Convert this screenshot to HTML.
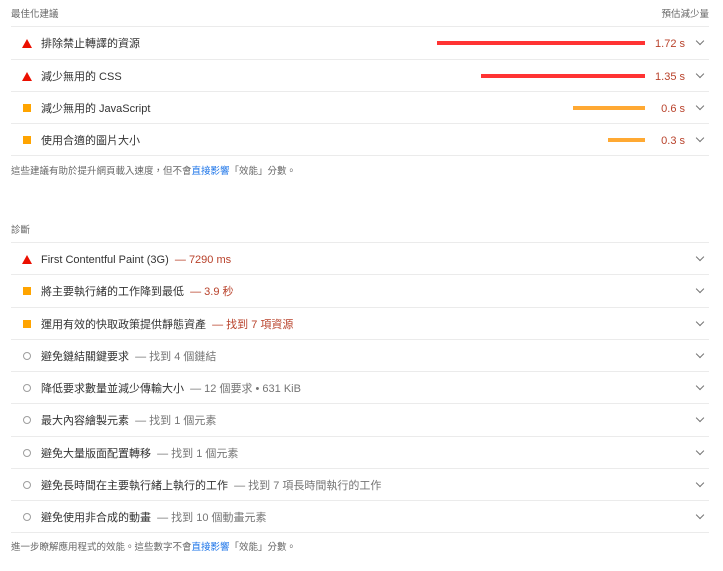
<!DOCTYPE html>
<html><head><meta charset="utf-8"><style>
*{margin:0;padding:0;box-sizing:border-box}
body{width:723px;height:571px;background:#fff;font-family:"Liberation Sans","Noto Sans CJK TC",sans-serif;font-size:11px;color:#333;position:relative;overflow:hidden}
.hd{position:absolute;font-size:9.5px;color:#666;line-height:12px}
.row{position:absolute;left:11px;width:698px;height:32px;border-top:1px solid #ebebeb}
.row .t{position:absolute;left:30px;top:10px;white-space:nowrap;line-height:14px}
.ic{position:absolute;left:11px;top:12px}
.tri{width:0;height:0;border-left:5px solid transparent;border-right:5px solid transparent;border-bottom:9px solid #eb0f00}
.sq{width:8px;height:8px;background:#ffa400;left:12px;top:12px}
.ci{width:8px;height:8px;border:1px solid #9e9e9e;border-radius:50%;left:12px;top:12px}
.bar{position:absolute;top:14px;height:4px}
.val{position:absolute;right:24px;top:10px;line-height:14px;color:#b8412a}
.chev{position:absolute;right:6px;top:11px;width:6px;height:6px;border-right:1px solid #757575;border-bottom:1px solid #757575;transform:rotate(45deg)}
.end{position:absolute;left:11px;width:698px;border-top:1px solid #ebebeb}
.r{color:#b8412a}.g{color:#757575}
.foot{position:absolute;left:11px;font-size:9.5px;color:#666;line-height:12px}
.foot a{color:#1a73e8;text-decoration:none}
</style></head><body>
<div class="hd" style="left:11px;top:9px">最佳化建議</div>
<div class="hd" style="right:14px;top:9px">預估減少量</div>

<div class="row" style="top:26px"><div class="ic tri"></div><div class="t">排除禁止轉譯的資源</div><div class="bar" style="left:426px;width:208px;background:#f33"></div><div class="val">1.72 s</div><div class="chev"></div></div>
<div class="row" style="top:59px"><div class="ic tri"></div><div class="t">減少無用的 CSS</div><div class="bar" style="left:470px;width:164px;background:#f33"></div><div class="val">1.35 s</div><div class="chev"></div></div>
<div class="row" style="top:91px"><div class="ic sq"></div><div class="t">減少無用的 JavaScript</div><div class="bar" style="left:562px;width:72px;background:#ffa933"></div><div class="val">0.6 s</div><div class="chev"></div></div>
<div class="row" style="top:123px"><div class="ic sq"></div><div class="t">使用合適的圖片大小</div><div class="bar" style="left:597px;width:37px;background:#ffa933"></div><div class="val">0.3 s</div><div class="chev"></div></div>
<div class="end" style="top:155px"></div>
<div class="foot" style="top:166px">這些建議有助於提升網頁載入速度，但不會<a>直接影響</a>「效能」分數。</div>

<div class="hd" style="left:11px;top:225px">診斷</div>
<div class="row" style="top:242px"><div class="ic tri"></div><div class="t">First Contentful Paint (3G) <span class="r">&nbsp;— 7290 ms</span></div><div class="chev"></div></div>
<div class="row" style="top:274px"><div class="ic sq"></div><div class="t">將主要執行緒的工作降到最低 <span class="r">&nbsp;— 3.9 秒</span></div><div class="chev"></div></div>
<div class="row" style="top:307px"><div class="ic sq"></div><div class="t">運用有效的快取政策提供靜態資產 <span class="r">&nbsp;— 找到 7 項資源</span></div><div class="chev"></div></div>
<div class="row" style="top:339px"><div class="ic ci"></div><div class="t">避免鏈結關鍵要求 <span class="g">&nbsp;— 找到 4 個鏈結</span></div><div class="chev"></div></div>
<div class="row" style="top:371px"><div class="ic ci"></div><div class="t">降低要求數量並減少傳輸大小 <span class="g">&nbsp;— 12 個要求 • 631 KiB</span></div><div class="chev"></div></div>
<div class="row" style="top:403px"><div class="ic ci"></div><div class="t">最大內容繪製元素 <span class="g">&nbsp;— 找到 1 個元素</span></div><div class="chev"></div></div>
<div class="row" style="top:436px"><div class="ic ci"></div><div class="t">避免大量版面配置轉移 <span class="g">&nbsp;— 找到 1 個元素</span></div><div class="chev"></div></div>
<div class="row" style="top:468px"><div class="ic ci"></div><div class="t">避免長時間在主要執行緒上執行的工作 <span class="g">&nbsp;— 找到 7 項長時間執行的工作</span></div><div class="chev"></div></div>
<div class="row" style="top:500px"><div class="ic ci"></div><div class="t">避免使用非合成的動畫 <span class="g">&nbsp;— 找到 10 個動畫元素</span></div><div class="chev"></div></div>
<div class="end" style="top:532px"></div>
<div class="foot" style="top:542px">進一步瞭解應用程式的效能。這些數字不會<a>直接影響</a>「效能」分數。</div>
</body></html>
